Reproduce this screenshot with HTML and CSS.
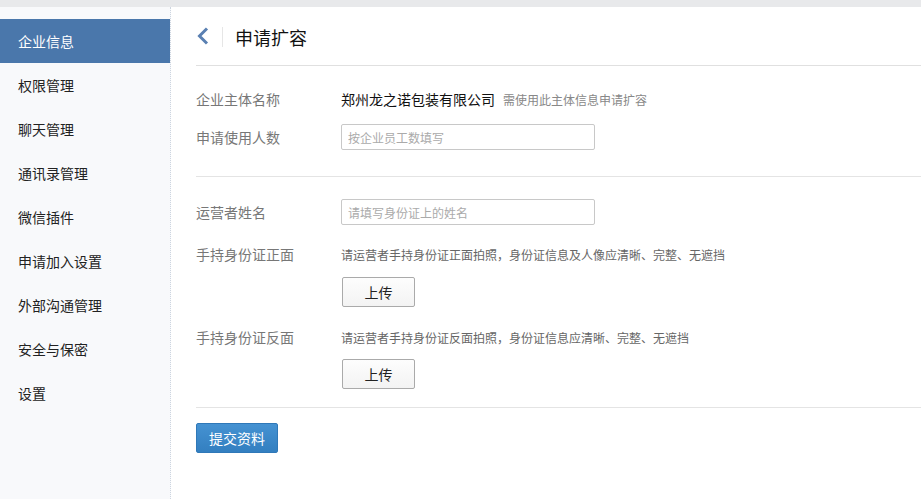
FILE: index.html
```html
<!DOCTYPE html>
<html lang="zh-CN">
<head>
<meta charset="utf-8">
<title>申请扩容</title>
<link rel="stylesheet" href="styles.css">
</head>
<body>
<div class="topbar"></div>
<div class="layout">
  <nav class="sidebar">
    <a class="nav-item active">企业信息</a>
    <a class="nav-item">权限管理</a>
    <a class="nav-item">聊天管理</a>
    <a class="nav-item">通讯录管理</a>
    <a class="nav-item">微信插件</a>
    <a class="nav-item">申请加入设置</a>
    <a class="nav-item">外部沟通管理</a>
    <a class="nav-item">安全与保密</a>
    <a class="nav-item">设置</a>
  </nav>
  <main class="main">
    <header class="header">
      <span class="back">
        <svg width="12" height="18" viewBox="0 0 12 18"><path d="M10 1.5 L2.5 9 L10 16.5" fill="none" stroke="#5a80b2" stroke-width="3"/></svg>
      </span>
      <span class="vsep"></span>
      <h1 class="title">申请扩容</h1>
    </header>
    <section class="section s1">
      <div class="row">
        <div class="label">企业主体名称</div>
        <div class="value"><span class="company">郑州龙之诺包装有限公司</span><span class="hint">需使用此主体信息申请扩容</span></div>
      </div>
      <div class="row r2">
        <div class="label">申请使用人数</div>
        <div class="value"><input class="input" type="text" placeholder="按企业员工数填写"></div>
      </div>
    </section>
    <section class="section s2">
      <div class="row">
        <div class="label">运营者姓名</div>
        <div class="value"><input class="input" type="text" placeholder="请填写身份证上的姓名"></div>
      </div>
      <div class="row r4">
        <div class="label">手持身份证正面</div>
        <div class="value"><span class="note">请运营者手持身份证正面拍照，身份证信息及人像应清晰、完整、无遮挡</span></div>
      </div>
      <div class="upload-row u1"><button class="upload">上传</button></div>
      <div class="row r5">
        <div class="label">手持身份证反面</div>
        <div class="value"><span class="note">请运营者手持身份证反面拍照，身份证信息应清晰、完整、无遮挡</span></div>
      </div>
      <div class="upload-row u2"><button class="upload">上传</button></div>
    </section>
    <div class="footer">
      <button class="submit">提交资料</button>
    </div>
  </main>
</div>
</body>
</html>
```

FILE: styles.css
```css
* { box-sizing: border-box; }
html, body { margin: 0; padding: 0; height: 100%; }
body {
  font-family: "Noto Sans CJK SC", "Liberation Sans", sans-serif;
  color: #222;
  background: #fff;
  overflow: hidden;
}
.topbar { height: 7px; background: #e8e9eb; }
.layout { display: flex; height: 492px; }
.sidebar {
  width: 171px;
  flex: none;
  background: #f8f9fb;
  border-right: 1px dotted #cdd5e0;
  padding-top: 12px;
  display: flex;
  flex-direction: column;
}
.nav-item {
  display: block;
  height: 44px;
  line-height: 44px;
  padding-left: 18px;
  font-size: 14px;
  color: #222;
}
.nav-item.active { background: #4a77ab; color: #fff; }
.main { flex: 1; padding-left: 25px; }
.header {
  height: 59px;
  border-bottom: 1px solid #e0e0e0;
  display: flex;
  align-items: center;
  padding-top: 1px;
}
.back { display: flex; width: 13px; margin-left: 1px; margin-top: -2px; }
.vsep { width: 1px; height: 20px; background: #e6e6e6; margin-left: 12px; margin-right: 12px; }
.title { margin: 0; font-size: 18px; font-weight: normal; color: #111; line-height: 24px; }
.section { border-bottom: 1px solid #e4e4e4; }
.s1 { padding-top: 20px; padding-bottom: 26px; }
.s2 { padding-top: 22px; padding-bottom: 18px; }
.row { display: flex; align-items: center; min-height: 26px; }
.r2 { margin-top: 12px; }
.r4 { margin-top: 16px; }
.r5 { margin-top: 17px; }
.label { width: 145px; flex: none; font-size: 14px; color: #777; }
.value { display: flex; align-items: center; }
.company { font-size: 14px; color: #111; }
.hint { font-size: 12px; color: #888; margin-left: 8px; }
.note { font-size: 12px; color: #666; }
.input {
  width: 254px;
  height: 26px;
  border: 1px solid #c8c8c8;
  border-radius: 2px;
  padding: 0 6px;
  font-family: inherit;
  font-size: 12px;
  outline: none;
}
.input::placeholder { color: #aaa; }
.upload-row { padding-left: 146px; }
.u1 { margin-top: 10px; }
.u2 { margin-top: 9px; }
.upload {
  width: 73px;
  height: 30px;
  border: 1px solid #aaa;
  border-radius: 2px;
  background: linear-gradient(#fdfdfd, #f3f3f3);
  font-family: inherit;
  font-size: 14px;
  color: #222;
  padding: 0;
}
.footer { padding-top: 15px; }
.submit {
  width: 82px;
  height: 30px;
  border: 1px solid #2f78b8;
  border-radius: 2px;
  background: linear-gradient(#4592d2, #337fc0);
  color: #fff;
  font-family: inherit;
  font-size: 14px;
  padding: 0;
}
```
